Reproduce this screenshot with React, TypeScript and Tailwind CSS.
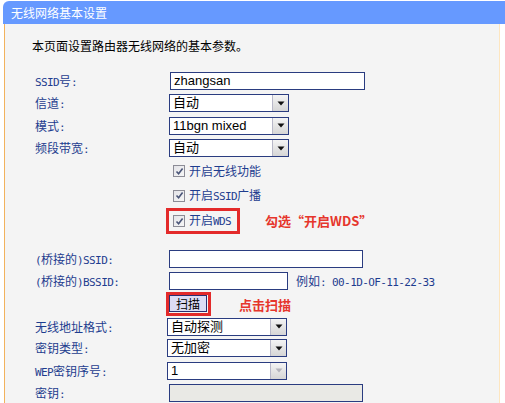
import React from "react";

const CJK = "font-['Noto_Sans_CJK_SC','Liberation_Sans',sans-serif]";
const MONO = "font-['DejaVu_Sans_Mono',monospace] text-[11px] tracking-[-0.6px]";

function M({ children }: { children: React.ReactNode }) {
  return <span className={MONO}>{children}</span>;
}

function Arrow({ disabled }: { disabled?: boolean }) {
  return (
    <div className="h-full w-[16px] border-l border-[#b8b8c8] bg-gradient-to-b from-[#f4f4f4] to-[#d6d6d6] flex items-center justify-center">
      <svg width="8" height="5" viewBox="0 0 8 5">
        <path d="M0.5 0.5 L7.5 0.5 L4 4.5 Z" fill={disabled ? "#b4b4bc" : "#111"} />
      </svg>
    </div>
  );
}

function Select({ value, disabled, cls }: { value: string; disabled?: boolean; cls?: string }) {
  return (
    <div
      className={`flex h-[18px] w-[120px] items-stretch border border-[#2a3c80] bg-white ${cls ?? ""}`}
    >
      <div className="flex-1 pl-[3px] text-[13px] leading-[16px] text-black font-['Liberation_Sans','Noto_Sans_CJK_SC',sans-serif]">
        {value}
      </div>
      <Arrow disabled={disabled} />
    </div>
  );
}

function Input({ value, w, gray }: { value?: string; w: string; gray?: boolean }) {
  return (
    <div
      className={`h-[18px] ${w} border border-[#2a3c80] ${gray ? "bg-[#e9e9e5]" : "bg-white"} pl-[3px] text-[13px] leading-[16px] text-black font-['Liberation_Sans',sans-serif]`}
    >
      {value}
    </div>
  );
}

function Check({ children }: { children: React.ReactNode }) {
  return (
    <div className="flex items-center">
      <span className="flex h-[12px] w-[12px] items-center justify-center border border-[#8c8c96] bg-gradient-to-br from-[#e4e4e8] to-[#f6f6f6]">
        <svg width="9" height="9" viewBox="0 0 9 9">
          <path d="M1.5 4.5 L3.6 6.8 L7.6 1.5" stroke="#4a5578" strokeWidth="1.6" fill="none" />
        </svg>
      </span>
      <span className="ml-[4px] text-[12px] leading-[14px] text-[#1e3d8f]">{children}</span>
    </div>
  );
}

function Row({
  label,
  h,
  children,
}: {
  label?: React.ReactNode;
  h: string;
  children?: React.ReactNode;
}) {
  return (
    <div className={`flex items-center ${h}`}>
      <div className="w-[134px] pt-[2px] text-[12px] leading-[14px] text-[#1e3d8f]">{label}</div>
      <div className="flex items-center">{children}</div>
    </div>
  );
}

export default function App() {
  return (
    <div className={`relative h-[403px] w-[505px] overflow-hidden bg-white pt-px ${CJK}`}>
      <div className="ml-[3px] h-[23px] rounded-tl-[6px] bg-[#6699ff] pl-[8px] text-[12px] leading-[23px] text-white">
        无线网络基本设置
      </div>
      <div className="ml-[4px] h-[380px] w-[496px] border-l border-r border-l-[#f2b25c] border-r-[#fde6c0] bg-[#f4f4f4] pl-[30px]">
        <div className="pt-[14px] text-[12px] leading-[16px] text-black">
          <span className="-ml-[3px]">本页面设置路由器无线网络的基本参数。</span>
        </div>
        <div className="mt-[16px]">
          <Row label={<><M>SSID</M>号<M>:</M></>} h="h-[22px]">
            <div className="ml-[1px]">
              <Input value="zhangsan" w="w-[195px]" />
            </div>
          </Row>
          <Row label={<>信道<M>:</M></>} h="h-[22px]">
            <Select value="自动" />
          </Row>
          <Row label={<>模式<M>:</M></>} h="h-[23px]">
            <Select value="11bgn mixed" />
          </Row>
          <Row label={<>频段带宽<M>:</M></>} h="h-[22px]">
            <Select value="自动" />
          </Row>
          <Row h="h-[24px]">
            <div className="ml-[4px]">
              <Check>开启无线功能</Check>
            </div>
          </Row>
          <Row h="h-[25px]">
            <div className="ml-[4px]">
              <Check>
                开启<M>SSID</M>广播
              </Check>
            </div>
          </Row>
          <Row h="h-[26px]">
            <div className="-ml-[3px] flex h-[26px] w-[74px] items-center border-[3px] border-[#e32a2a] pl-[4px]">
              <Check>
                开启<M>WDS</M>
              </Check>
            </div>
            <span className="ml-[25px] text-[13px] font-bold text-[#e6362c]">勾选“开启WDS”</span>
          </Row>
          <div className="h-[13px]" />
          <Row label={<><M>(</M>桥接的<M>)SSID:</M></>} h="h-[23px]">
            <Input w="w-[194px]" />
          </Row>
          <Row label={<><M>(</M>桥接的<M>)BSSID:</M></>} h="h-[22px]">
            <Input w="w-[119px]" />
            <span className="ml-[8px] pt-[2px] text-[12px] text-[#1e3d8f]">
              例如<M>: 00-1D-OF-11-22-33</M>
            </span>
          </Row>
          <Row h="h-[24px]">
            <div className="-ml-[3px] flex h-[24px] w-[45px] items-start border-[3px] border-[#e32a2a]">
              <div className="flex h-[17px] w-[38px] items-center justify-center border border-[#2a2f70] bg-[#dcdcf4] text-[12px] leading-[15px] text-black">
                扫描
              </div>
            </div>
            <span className="ml-[28px] mt-[2px] text-[13px] font-bold text-[#e6362c]">点击扫描</span>
          </Row>
          <Row label={<>无线地址格式<M>:</M></>} h="h-[21px]">
            <Select value="自动探测" cls="-ml-[2px]" />
          </Row>
          <Row label={<>密钥类型<M>:</M></>} h="h-[22px]">
            <Select value="无加密" cls="-ml-[2px]" />
          </Row>
          <Row label={<><M>WEP</M>密钥序号<M>:</M></>} h="h-[23px]">
            <Select value="1" disabled cls="-ml-[2px]" />
          </Row>
          <Row label={<>密钥<M>:</M></>} h="h-[22px]">
            <Input w="w-[194px]" gray />
          </Row>
        </div>
      </div>
    </div>
  );
}
